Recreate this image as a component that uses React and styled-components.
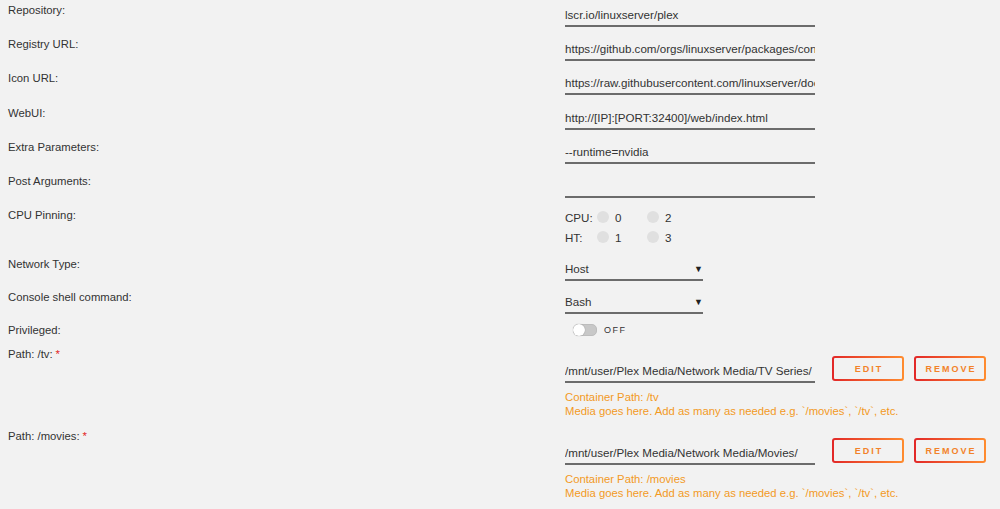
import React from "react";
import styled, { createGlobalStyle } from "styled-components";

const Global = createGlobalStyle`
  html, body { margin: 0; padding: 0; background: #f2f2f2; }
  body { font-family: "Liberation Sans", Arial, sans-serif; color: #333; }
`;

const Page = styled.div`
  padding: 0 0 0 8px;
  width: 1000px;
  height: 509px;
  box-sizing: border-box;
  overflow: hidden;
  background: #f2f2f2;
`;

const Row = styled.div`
  display: grid;
  grid-template-columns: 557px 1fr;
  height: ${(p) => p.$h}px;
`;

const Label = styled.div`
  font-size: 11.3px;
  line-height: 20px;
  color: #333;
`;

const Req = styled.span`
  color: #e22828;
  margin-left: 3px;
`;

const Value = styled.div`
  display: flex;
  flex-direction: column;
`;

const Input = styled.div`
  width: ${(p) => p.$w || 250}px;
  flex: none;
  box-sizing: border-box;
  padding-top: 5px;
  height: 27px;
  font-size: 11.6px;
  line-height: 20px;
  white-space: nowrap;
  overflow: hidden;
  border-bottom: 2px solid #6c6c6c;
  color: #333;
`;

const SelectBox = styled(Input)`
  display: flex;
  justify-content: space-between;
  padding-right: 0;
`;

const Arrow = styled.span`
  font-size: 9px;
  color: #222;
`;

const PinGrid = styled.div`
  display: grid;
  grid-template-columns: 32px 18px 32px 18px 20px;
  grid-auto-rows: 20px;
  align-items: center;
  font-size: 11.6px;
  padding-top: 2px;
`;

const Dot = styled.span`
  width: 12px;
  height: 12px;
  border-radius: 50%;
  background: #e0e0e0;
`;

const ToggleWrap = styled.div`
  display: flex;
  align-items: center;
  gap: 7px;
  padding-left: 8px;
  height: 20px;
`;

const Track = styled.span`
  position: relative;
  width: 22px;
  height: 10px;
  border-radius: 5px;
  background: #c8c8c8;
  border: 1px solid #bdbdbd;
`;

const Knob = styled.span`
  position: absolute;
  left: -1px;
  top: -1px;
  width: 12px;
  height: 12px;
  border-radius: 50%;
  background: #fff;
  box-shadow: 0 0 1px rgba(0,0,0,0.4);
`;

const Off = styled.span`
  font-size: 9px;
  letter-spacing: 1.5px;
  color: #333;
`;

const PathLine = styled.div`
  display: flex;
  align-items: flex-start;
  gap: 17px;
  padding-top: 12px;
`;

const Btn = styled.button`
  width: 72px;
  height: 25px;
  box-sizing: border-box;
  border: 2px solid transparent;
  border-radius: 3px;
  background:
    linear-gradient(#f2f2f2, #f2f2f2) padding-box,
    linear-gradient(90deg, #e22828, #ff8c2f) border-box;
  font-family: "Liberation Sans", Arial, sans-serif;
  font-weight: bold;
  font-size: 9px;
  letter-spacing: 2px;
  color: #f2822a;
  padding: 0 0 0 2px;
  margin-left: ${(p) => p.$ml || 0}px;
  cursor: pointer;
`;

const Hint = styled.div`
  color: #f29a1f;
  font-size: 11.3px;
  line-height: 14px;
  padding-top: 7px;
`;

const simple = [
  ["Repository:", "lscr.io/linuxserver/plex"],
  ["Registry URL:", "https://github.com/orgs/linuxserver/packages/container/package/plex"],
  ["Icon URL:", "https://raw.githubusercontent.com/linuxserver/docker-templates/master/linuxserver.io/img/plex-logo.png"],
  ["WebUI:", "http://[IP]:[PORT:32400]/web/index.html"],
  ["Extra Parameters:", "--runtime=nvidia"],
  ["Post Arguments:", ""],
];

const paths = [
  { label: "Path: /tv:", host: "/mnt/user/Plex Media/Network Media/TV Series/", container: "/tv" },
  { label: "Path: /movies:", host: "/mnt/user/Plex Media/Network Media/Movies/", container: "/movies" },
];

export default function App() {
  return (
    <Page>
      <Global />
      {simple.map(([l, v]) => (
        <Row key={l} $h={34.2}>
          <Label>{l}</Label>
          <Value>
            <Input>{v}</Input>
          </Value>
        </Row>
      ))}
      <Row $h={49}>
        <Label>CPU Pinning:</Label>
        <PinGrid>
          <span>CPU:</span><Dot /><span>0</span><Dot /><span>2</span>
          <span>HT:</span><Dot /><span>1</span><Dot /><span>3</span>
        </PinGrid>
      </Row>
      <Row $h={33}>
        <Label>Network Type:</Label>
        <Value>
          <SelectBox $w={138}>
            <span>Host</span>
            <Arrow>▼</Arrow>
          </SelectBox>
        </Value>
      </Row>
      <Row $h={33}>
        <Label>Console shell command:</Label>
        <Value>
          <SelectBox $w={138}>
            <span>Bash</span>
            <Arrow>▼</Arrow>
          </SelectBox>
        </Value>
      </Row>
      <Row $h={24}>
        <Label>Privileged:</Label>
        <ToggleWrap>
          <Track><Knob /></Track>
          <Off>OFF</Off>
        </ToggleWrap>
      </Row>
      {paths.map((p) => (
        <Row key={p.label} $h={82}>
          <Label>
            {p.label}
            <Req>*</Req>
          </Label>
          <Value>
            <PathLine>
              <Input>{p.host}</Input>
              <Btn>EDIT</Btn>
              <Btn $ml={-7}>REMOVE</Btn>
            </PathLine>
            <Hint>
              Container Path: {p.container}
              <br />
              Media goes here. Add as many as needed e.g. `/movies`, `/tv`, etc.
            </Hint>
          </Value>
        </Row>
      ))}
    </Page>
  );
}
